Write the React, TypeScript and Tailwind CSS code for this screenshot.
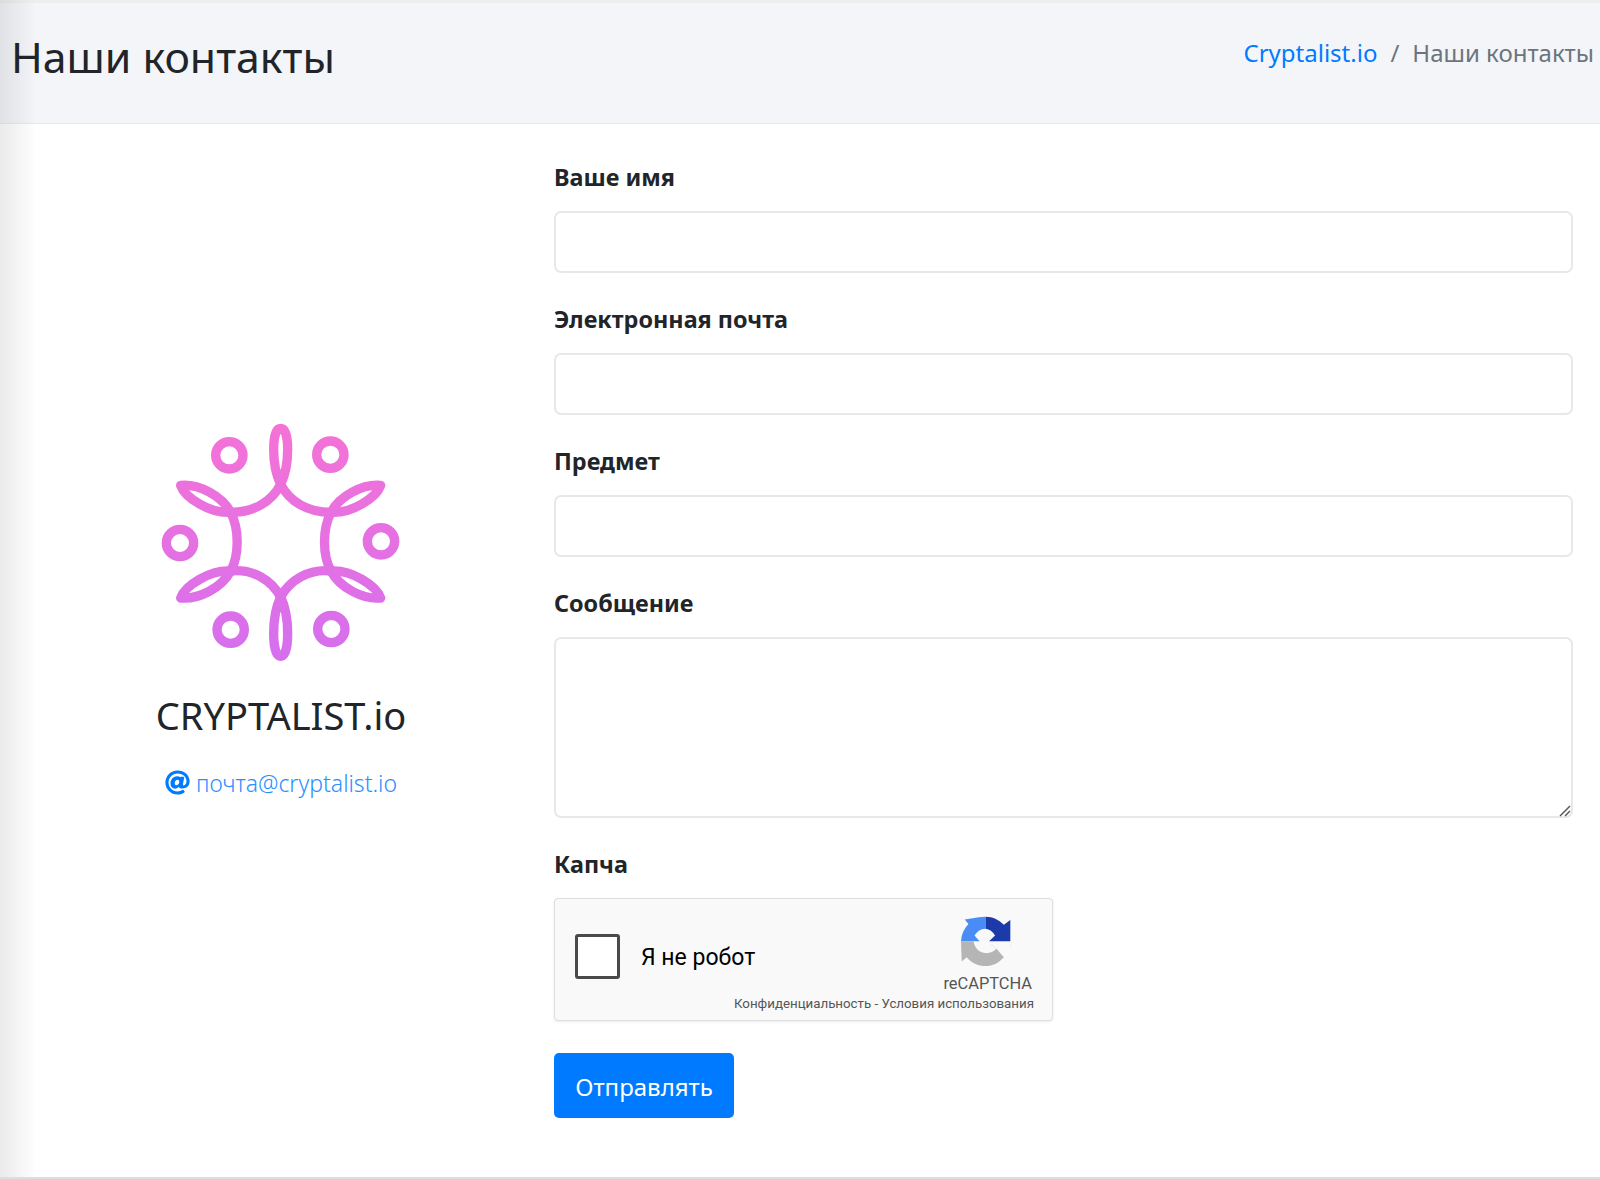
import { FaAt } from 'react-icons/fa';

const labelClass = 'block text-[23.4px] font-bold leading-[34px] text-[#212529] mb-[17px]';
const inputClass = 'block w-full h-[62px] rounded-[7px] border-2 border-[#e6e8ec] bg-white';

function Logo() {
  const rings = [
    [298, 165],
    [601, 163],
    [150, 428],
    [753, 423],
    [302, 688],
    [604, 686],
  ];
  return (
    <svg width="242" height="240" viewBox="90 65 726 720" fill="none">
      <defs>
        <linearGradient id="logoGrad" gradientUnits="userSpaceOnUse" x1="452" y1="70" x2="452" y2="780">
          <stop offset="0" stopColor="#f572d6" />
          <stop offset="1" stopColor="#d56fee" />
        </linearGradient>
      </defs>
      <g stroke="url(#logoGrad)" strokeWidth="28" strokeLinecap="round" strokeLinejoin="round">
        {rings.map(([cx, cy]) => (
          <circle key={`${cx}-${cy}`} cx={cx} cy={cy} r="41" />
        ))}
        <path d="M452 252C424 195 424 84 452 84C480 84 480 195 452 252Z" />
        <path d="M452 590C424 647 424 768 452 768C480 768 480 647 452 590Z" />
        <path d="M302 336C275 285 205 250 152 255C165 292 240 340 302 336Z" />
        <path d="M603 336C630 285 700 250 752 255C739 292 665 340 603 336Z" />
        <path d="M302 512C275 563 205 598 152 593C165 556 240 508 302 512Z" />
        <path d="M603 512C630 563 700 598 752 593C739 556 665 508 603 512Z" />
        <path d="M452 252C425 305 370 336 302 336" />
        <path d="M452 252C479 305 535 336 603 336" />
        <path d="M302 336C328 385 328 465 302 512" />
        <path d="M603 336C577 385 577 465 603 512" />
        <path d="M302 512C370 505 425 540 452 590" />
        <path d="M603 512C535 505 479 540 452 590" />
      </g>
    </svg>
  );
}

function RecaptchaIcon() {
  return (
    <svg width="50" height="50" viewBox="95 50 148 148">
      <path fill="#4a8cf6" d="M168 52V88C152 88 142 97 135 108L150 125H95C96 105 104 88 117 74L106 60L148 54Z" />
      <path fill="#1c3aa9" d="M168 52C190 52 208 62 222 76L241 62V125H178L196 108C188 96 180 89 168 88Z" />
      <path fill="#b5b5b5" d="M95 125H132C135 146 150 160 170 160C182 160 192 155 200 147L184 133H241C241 150 232 172 222 172C205 190 190 198 168 198C145 198 125 188 112 172L97 185Z" />
      <path fill="#f9f9f9" d="M184 133L241 133V172H222L200 147Z" />
    </svg>
  );
}

export default function App() {
  return (
    <div className="relative min-h-[1179px] border-b-2 border-[#dddddd] bg-white font-['Noto_Sans',sans-serif] text-[#212529]">
      <div className="pointer-events-none absolute inset-y-0 left-0 w-[37px] bg-gradient-to-r from-black/8 to-transparent" />

      <header className="h-[124px] border-t-[3px] border-b border-t-[#eeeeee] border-b-[#e8e9ee] bg-[#f4f5f9] flex items-start justify-between pl-[11px] pr-[6px]">
        <h1 className="text-[42.8px] leading-[60px] mt-[24px] font-normal">Наши контакты</h1>
        <nav className="flex items-center text-[24px] leading-[36px] mt-[32px]">
          <a className="text-[#007bff]">Cryptalist.io</a>
          <span className="text-[#6c757d] mx-[13px]">/</span>
          <span className="text-[#6c757d]">Наши контакты</span>
        </nav>
      </header>

      <main className="flex pr-[27px]">
        <section className="w-[554px] shrink-0 pl-[8px] pt-[298px] flex flex-col items-center">
          <Logo />
          <div className="text-[38px] leading-[54px] mt-[26px] font-normal">CRYPTALIST.io</div>
          <a className="flex items-center mt-[25px] text-[#2a8fff] text-[23px] leading-[33px] font-light">
            <FaAt className="text-[25px] text-[#007bff] mr-[6px] -mt-[3px]" />
            почта@cryptalist.io
          </a>
        </section>

        <form className="flex-1 pt-[36px]">
          <div className="mb-[29px]">
            <label className={labelClass}>Ваше имя</label>
            <input className={inputClass} />
          </div>
          <div className="mb-[29px]">
            <label className={labelClass}>Электронная почта</label>
            <input className={inputClass} />
          </div>
          <div className="mb-[29px]">
            <label className={labelClass}>Предмет</label>
            <input className={inputClass} />
          </div>
          <div className="mb-[29px]">
            <label className={labelClass}>Сообщение</label>
            <div className="relative">
              <textarea className="block w-full h-[181px] resize-none rounded-[7px] border-2 border-[#e6e8ec] bg-white" />
              <svg className="absolute right-[2px] bottom-[1px]" width="12" height="12" viewBox="0 0 12 12" fill="none" stroke="#555555" strokeWidth="1.4">
                <path d="M1 11L11 1" />
                <path d="M6 11L11 6" />
              </svg>
            </div>
          </div>
          <div className="mb-[32px]">
            <label className={labelClass}>Капча</label>
            <div className="w-[499px] h-[123px] rounded-[4px] border border-[#dedede] bg-[#f9f9f9] shadow-[0_1px_3px_rgba(0,0,0,0.08)] flex items-start justify-between font-['Roboto',sans-serif]">
              <div className="flex items-center w-[158px] shrink-0 mt-[35px] ml-[20px]">
                <div className="w-[45px] h-[45px] shrink-0 rounded-[3px] border-[3px] border-[#4a4a4a] bg-white" />
                <span className="ml-[21px] mt-[3px] text-[23px] text-black whitespace-nowrap">Я не робот</span>
              </div>
              <div className="flex flex-col items-end shrink-0 pr-[18px] pt-[17px]">
                <div className="pr-[23px]">
                  <RecaptchaIcon />
                </div>
                <span className="text-[16.4px] leading-[20px] text-[#555555] mt-[8px] pr-[2px]">reCAPTCHA</span>
                <span className="text-[13.3px] leading-[18px] text-[#555555] mt-[1px] whitespace-nowrap">Конфиденциальность - Условия использования</span>
              </div>
            </div>
          </div>
          <button type="button" className="w-[180px] h-[65px] rounded-[5px] bg-[#007bff] text-white text-[24px] pt-[2px]">
            Отправлять
          </button>
        </form>
      </main>
    </div>
  );
}
